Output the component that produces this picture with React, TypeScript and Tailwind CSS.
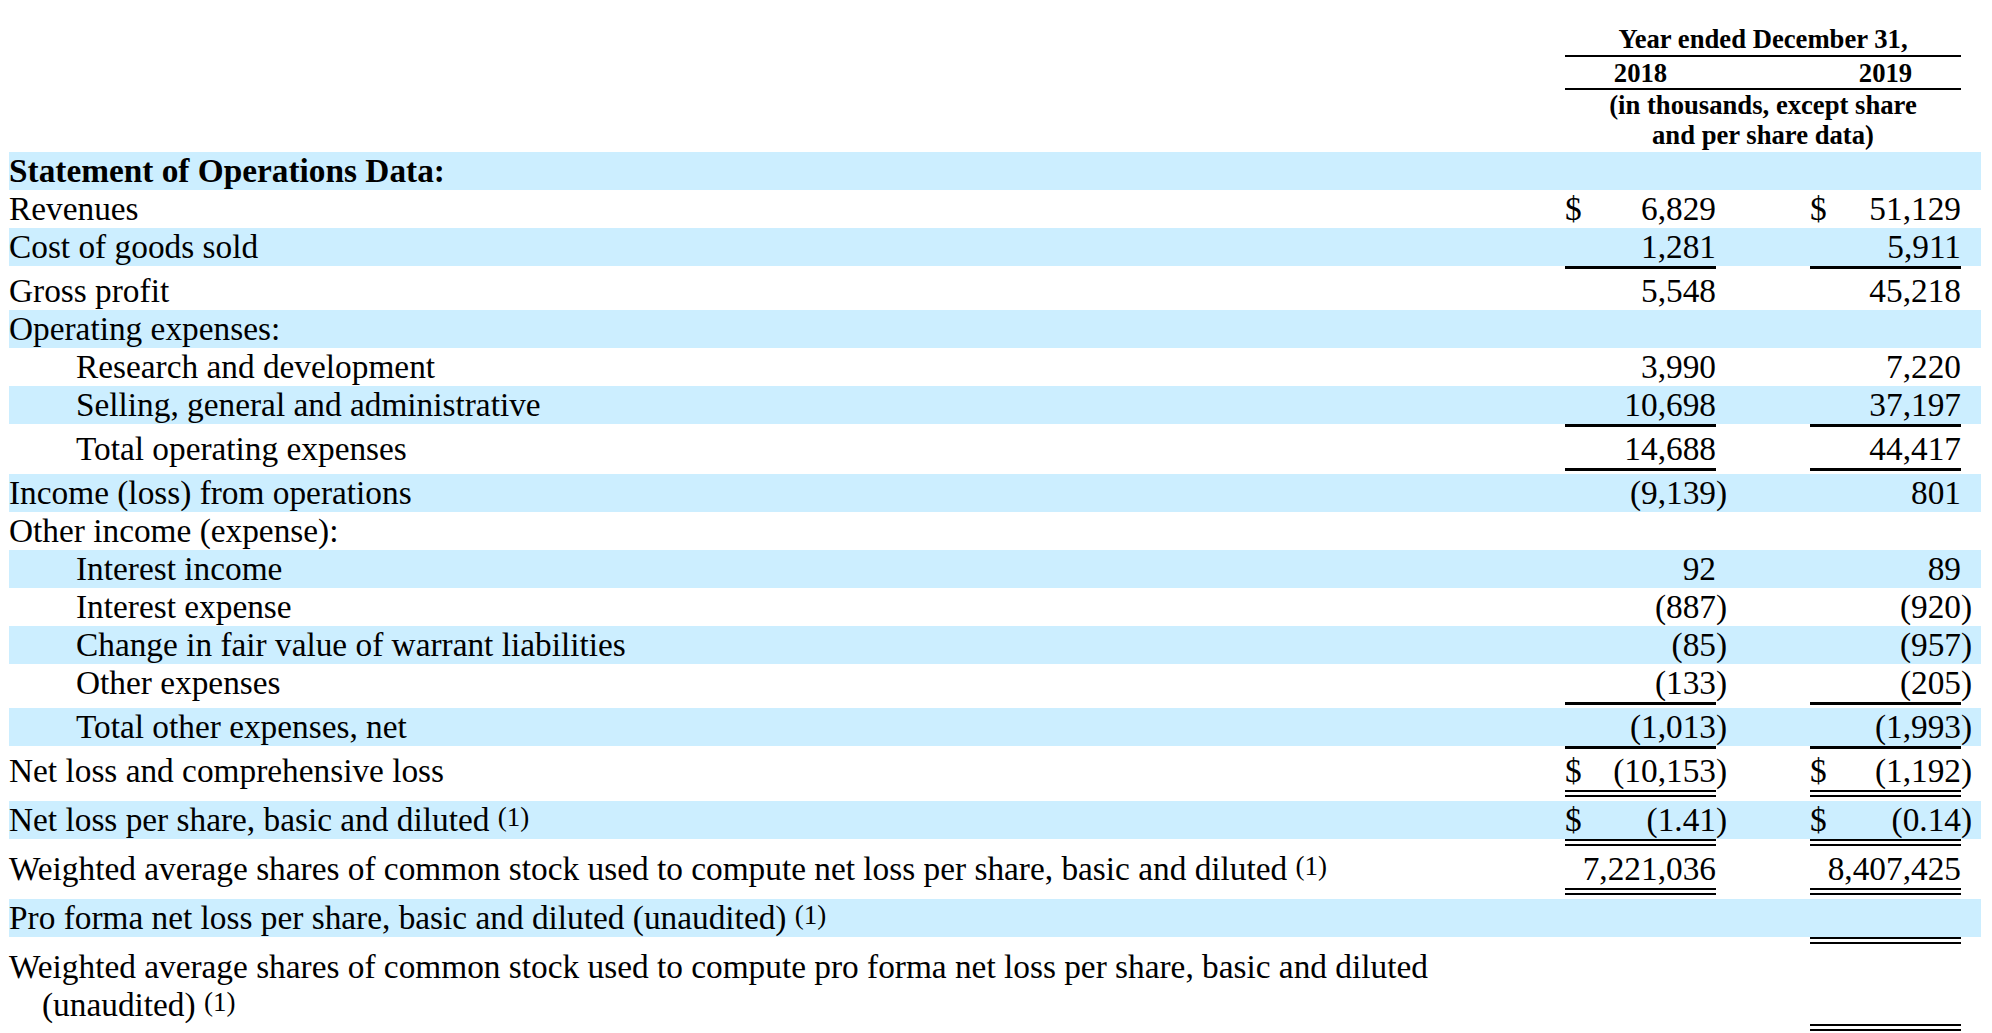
import React from "react";

type Border = "single" | "double" | undefined;

type RowData = {
  label: React.ReactNode;
  bold?: boolean;
  indent?: boolean;
  blue?: boolean;
  d1?: boolean;
  v1?: string;
  p1?: boolean;
  d2?: boolean;
  v2?: string;
  p2?: boolean;
  b1?: Border;
  b2?: Border;
};

const Sup = () => (
  <span className="relative -top-[5px] text-[27px] leading-[0]">(1)</span>
);

const rows: RowData[] = [
  { label: "Statement of Operations Data:", bold: true, blue: true },
  { label: "Revenues", d1: true, v1: "6,829", d2: true, v2: "51,129" },
  { label: "Cost of goods sold", blue: true, v1: "1,281", v2: "5,911", b1: "single", b2: "single" },
  { label: "Gross profit", v1: "5,548", v2: "45,218" },
  { label: "Operating expenses:", blue: true },
  { label: "Research and development", indent: true, v1: "3,990", v2: "7,220" },
  { label: "Selling, general and administrative", indent: true, blue: true, v1: "10,698", v2: "37,197", b1: "single", b2: "single" },
  { label: "Total operating expenses", indent: true, v1: "14,688", v2: "44,417", b1: "single", b2: "single" },
  { label: "Income (loss) from operations", blue: true, v1: "(9,139", p1: true, v2: "801" },
  { label: "Other income (expense):" },
  { label: "Interest income", indent: true, blue: true, v1: "92", v2: "89" },
  { label: "Interest expense", indent: true, v1: "(887", p1: true, v2: "(920", p2: true },
  { label: "Change in fair value of warrant liabilities", indent: true, blue: true, v1: "(85", p1: true, v2: "(957", p2: true },
  { label: "Other expenses", indent: true, v1: "(133", p1: true, v2: "(205", p2: true, b1: "single", b2: "single" },
  { label: "Total other expenses, net", indent: true, blue: true, v1: "(1,013", p1: true, v2: "(1,993", p2: true, b1: "single", b2: "single" },
  { label: "Net loss and comprehensive loss", d1: true, v1: "(10,153", p1: true, d2: true, v2: "(1,192", p2: true, b1: "double", b2: "double" },
  {
    label: (
      <>
        Net loss per share, basic and diluted <Sup />
      </>
    ),
    blue: true,
    d1: true,
    v1: "(1.41",
    p1: true,
    d2: true,
    v2: "(0.14",
    p2: true,
    b1: "double",
    b2: "double",
  },
  {
    label: (
      <>
        Weighted average shares of common stock used to compute net loss per share, basic and diluted <Sup />
      </>
    ),
    v1: "7,221,036",
    v2: "8,407,425",
    b1: "double",
    b2: "double",
  },
  {
    label: (
      <>
        Pro forma net loss per share, basic and diluted (unaudited) <Sup />
      </>
    ),
    blue: true,
    b2: "double",
  },
  {
    label: (
      <>
        <div>Weighted average shares of common stock used to compute pro forma net loss per share, basic and diluted</div>
        <div className="pl-[33px]">
          (unaudited) <Sup />
        </div>
      </>
    ),
    b2: "double",
  },
];

function ValueCell({ dollar, value }: { dollar?: boolean; value?: string }) {
  return (
    <div className={`flex w-[151px] shrink-0 ${dollar ? "justify-between" : "justify-end"}`}>
      {dollar && <span>$</span>}
      {value && <span>{value}</span>}
    </div>
  );
}

function Line({ kind }: { kind: Border }) {
  if (kind === "single") return <div className="h-[3px] w-[151px] shrink-0 bg-black" />;
  if (kind === "double")
    return <div className="h-[7px] w-[151px] shrink-0 border-y-2 border-black" />;
  return <div className="w-[151px] shrink-0" />;
}

function Row({ r }: { r: RowData }) {
  const hasBorder = r.b1 || r.b2;
  const isDouble = r.b1 === "double" || r.b2 === "double";
  return (
    <>
      <div className={`flex leading-[38px] ${r.blue ? "bg-[#cceeff]" : ""}`}>
        <div className={`w-[1556px] shrink-0 ${r.indent ? "pl-[67px]" : ""} ${r.bold ? "font-bold" : ""}`}>
          {r.label}
        </div>
        <ValueCell dollar={r.d1} value={r.v1} />
        <div className="w-[94px] shrink-0">{r.p1 ? ")" : ""}</div>
        <ValueCell dollar={r.d2} value={r.v2} />
        <div className="w-[20px] shrink-0">{r.p2 ? ")" : ""}</div>
      </div>
      {hasBorder && (
        <div className={`flex items-start ${isDouble ? "h-[11px]" : "h-[6px]"}`}>
          <div className="w-[1556px] shrink-0" />
          <Line kind={r.b1} />
          <div className="w-[94px] shrink-0" />
          <Line kind={r.b2} />
          <div className="w-[20px] shrink-0" />
        </div>
      )}
    </>
  );
}

export default function App() {
  return (
    <div className="h-[1033px] w-[1992px] overflow-hidden bg-white font-['Liberation_Serif','Times_New_Roman',serif] text-[33.33px] text-black">
      <div className="ml-[9px] w-[1972px]">
        <div className="flex h-[152px]">
          <div className="w-[1556px] shrink-0" />
          <div className="w-[396px] shrink-0 pt-[24px] text-center text-[26.67px] font-bold leading-[30px]">
            <div className="border-b-2 border-black pb-[1px]">Year ended December 31,</div>
            <div className="flex border-b-2 border-black pt-[1px]">
              <div className="w-[151px]">2018</div>
              <div className="w-[94px]" />
              <div className="w-[151px]">2019</div>
            </div>
            <div>
              (in thousands, except share
              <br />
              and per share data)
            </div>
          </div>
        </div>
        {rows.map((r, i) => (
          <Row key={i} r={r} />
        ))}
      </div>
    </div>
  );
}
